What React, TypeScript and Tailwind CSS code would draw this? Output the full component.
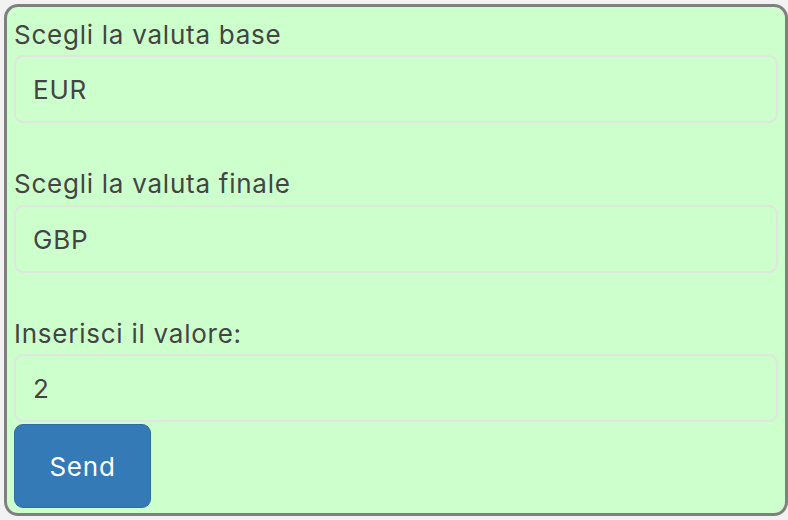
export default function App() {
  const font = { fontFamily: 'Inter, "Liberation Sans", sans-serif' };
  return (
    <div className="w-[788px] h-[520px] bg-[#f2f2f2] pt-[4px] pl-[4px]" style={font}>
      <div className="w-[784px] h-[512px] border-[3px] border-[#808080] rounded-[14px] bg-[#ccffcc] px-[7px] pt-[9px] text-[#444] text-[26px] tracking-[0.75px]">
        <div className="mb-[42px]">
          <label className="block leading-[37px] mb-[2px]">Scegli la valuta base</label>
          <div className="h-[68px] border-2 border-[#dfe6df] rounded-[9px] pl-[17px] flex items-center">EUR</div>
        </div>
        <div className="mb-[42px]">
          <label className="block leading-[37px] mb-[3px]">Scegli la valuta finale</label>
          <div className="h-[68px] border-2 border-[#dfe6df] rounded-[9px] pl-[17px] flex items-center">GBP</div>
        </div>
        <div>
          <label className="block leading-[37px] mb-[2px]">Inserisci il valore:</label>
          <div className="h-[68px] border-2 border-[#dfe6df] rounded-[9px] pl-[17px] flex items-center">2</div>
        </div>
        <button className="mt-[2px] w-[137px] h-[84px] bg-[#337ab7] border border-[#2e6da4] rounded-[9px] text-white text-[26px]">Send</button>
      </div>
    </div>
  );
}
